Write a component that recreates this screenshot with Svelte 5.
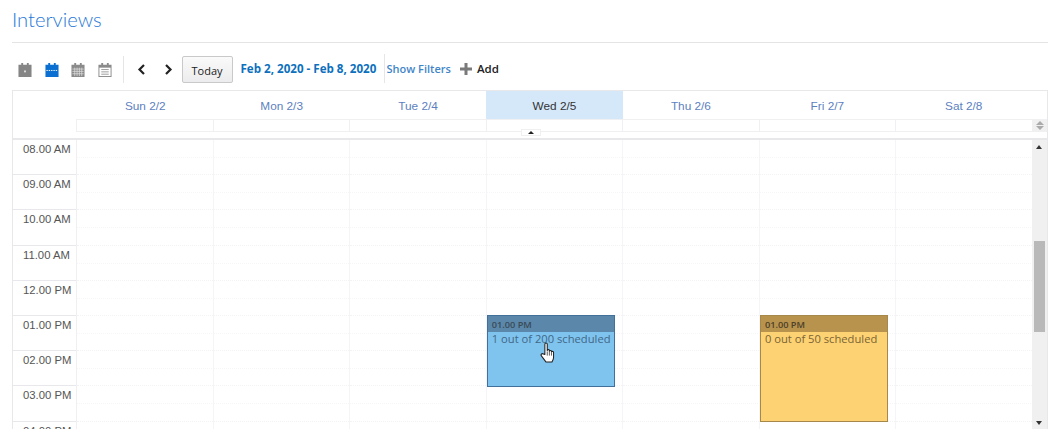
<script lang="ts">
	const days = [
		{ label: 'Sun 2/2' },
		{ label: 'Mon 2/3' },
		{ label: 'Tue 2/4' },
		{ label: 'Wed 2/5', today: true },
		{ label: 'Thu 2/6' },
		{ label: 'Fri 2/7' },
		{ label: 'Sat 2/8' }
	];
	const hours = [
		'08.00 AM',
		'09.00 AM',
		'10.00 AM',
		'11.00 AM',
		'12.00 PM',
		'01.00 PM',
		'02.00 PM',
		'03.00 PM',
		'04.00 PM'
	];
	const events: Record<number, { text: string; kind: string; height: number }> = {
		3: { text: '1 out of 200 scheduled', kind: 'blue', height: 72 },
		5: { text: '0 out of 50 scheduled', kind: 'amber', height: 107 }
	};
</script>

<div class="page">
	<h1 class="title">Interviews</h1>

	<div class="toolbar">
		<div class="views">
			<svg width="14" height="14" viewBox="0 0 14 15"><path d="M0 2h3V0h2v2h4V0h2v2h3v13H0z" fill="#858585" /><rect x="6" y="8" width="2" height="2" fill="#ddd" /></svg>
			<svg width="14" height="14" viewBox="0 0 14 15"><path d="M0 2h3V0h2v2h4V0h2v2h3v13H0z" fill="#0a6fd0" /><path d="M1 8h12" stroke="#fff" stroke-dasharray="1.5 1" /></svg>
			<svg width="14" height="14" viewBox="0 0 14 15"><path d="M0 2h3V0h2v2h4V0h2v2h3v13H0z" fill="#8a8a8a" /><path d="M1 6.500h12M1 9h12M1 11.500h12M3.500 5v9M6 5v9M8.500 5v9M11 5v9" stroke="#ddd" stroke-width=".8" /></svg>
			<svg width="14" height="14" viewBox="0 0 14 15"><path d="M0 2h3V0h2v2h4V0h2v2h3v13H0z" fill="#8a8a8a" /><rect x="1" y="5" width="12" height="9" fill="#fff" /><path d="M3 7h8M3 9.500h8M3 12h8" stroke="#999" /></svg>
		</div>
		<div class="nav">
			<svg width="9" height="11" viewBox="0 0 9 11"><path d="M7 1 2.500 5.500 7 10" fill="none" stroke="#222" stroke-width="2.200" /></svg>
			<svg width="9" height="11" viewBox="0 0 9 11"><path d="M2 1l4.500 4.500L2 10" fill="none" stroke="#222" stroke-width="2.200" /></svg>
		</div>
		<button class="today">Today</button>
		<span class="range">Feb 2, 2020 - Feb 8, 2020</span>
		<button class="filters">Show Filters</button>
		<button class="add">
			<svg width="12" height="12" viewBox="0 0 12 12"><path d="M4.500 0h3v4.500H12v3H7.500V12h-3V7.500H0v-3h4.500z" fill="#7a7a7a" /></svg>
			Add
		</button>
	</div>

	<div class="calendar">
		<div class="head">
			<div class="days">
				{#each days as day}
					<div class="day" class:today-col={day.today}>{day.label}</div>
				{/each}
			</div>
			<div class="allday">
				{#each days as _}
					<div class="slot"></div>
				{/each}
				<div class="spin"><i class="up"></i><i class="down"></i></div>
			</div>
			<div class="splitter"><span class="grip"></span></div>
		</div>

		<div class="body">
			<div class="times">
				{#each hours as hour}
					<div class="time">{hour}</div>
				{/each}
			</div>
			<div class="grid">
				{#each days as _, i}
					<div class="col">
						{#each hours as __}
							<div class="cell"></div>
						{/each}
						{#if events[i]}
							<div class="event {events[i].kind}" style="height: {events[i].height}px">
								<div class="event-time">01.00 PM</div>
								<div class="event-text">{events[i].text}</div>
							</div>
						{/if}
						{#if i === 3}
							<svg class="hand" width="16" height="22" viewBox="0 0 15 21">
								<path d="M4.500 12V2.200c0-1.600 2.300-1.600 2.300 0V8c0-1 2-1 2 0v.8c0-1 2-1 2 0v.8c0-.9 2-.9 2 .2v4.700c0 2-.8 3-1.500 4.500H5.500L1.200 13.200c-1-1.300.7-2.800 1.900-1.700z" fill="#fff" stroke="#222" stroke-width="1" stroke-linejoin="round" />
								<path d="M6.800 9v4M8.800 9v4M10.800 10v3" stroke="#222" stroke-width=".7" />
							</svg>
						{/if}
					</div>
				{/each}
			</div>
			<div class="scrollbar">
				<i class="arrow-up"></i>
				<div class="thumb"></div>
				<i class="arrow-down"></i>
			</div>
		</div>
	</div>
</div>

<style>
	:global(body) {
		margin: 0;
		background: #fff;
	}
	.page {
		width: 1056px;
		height: 439px;
		padding: 0 8px 10px 12px;
		box-sizing: border-box;
		overflow: hidden;
		display: flex;
		flex-direction: column;
		font-family: 'Liberation Sans', Arial, sans-serif;
	}
	.title {
		margin: 0;
		flex: none;
		box-sizing: border-box;
		height: 43px;
		padding-top: 6px;
		font: 300 20.200px/26px Lato, sans-serif;
		color: #1f78d8;
		border-bottom: 1px solid #e4e4e4;
	}
	.toolbar {
		flex: none;
		height: 47px;
		display: flex;
		align-items: center;
		box-sizing: border-box;
		padding: 6px 0 0 6px;
	}
	.views {
		display: flex;
		gap: 12.500px;
		padding-right: 11px;
		height: 27px;
		align-items: center;
		border-right: 1px solid #e6e6e6;
	}
	.nav {
		display: flex;
		gap: 18px;
		padding-left: 13px;
		padding-right: 9px;
		margin-top: -1px;
	}
	.today {
		width: 51px;
		height: 27px;
		padding: 2px 0 0;
		font: 11px 'Open Sans', sans-serif;
		color: #222;
		background: linear-gradient(#fafafa, #ececee);
		border: 1px solid #c9c9c9;
		border-radius: 2px;
	}
	.range {
		margin-left: 8px;
		width: 143px;
		height: 29px;
		border-right: 1px solid #e6e6e6;
		font: 700 11.600px/29px 'Open Sans', sans-serif;
		color: #0d70bd;
		white-space: nowrap;
		margin-top: -2px;
	}
	.filters {
		margin-left: 2px;
		padding: 0;
		border: none;
		background: none;
		font: 600 11px 'Open Sans', sans-serif;
		color: #3f86c8;
		white-space: nowrap;
		margin-top: -2px;
	}
	.add {
		margin-left: 9px;
		padding: 0;
		display: flex;
		align-items: center;
		gap: 5px;
		border: none;
		background: none;
		font: 600 11.500px 'Open Sans', sans-serif;
		color: #222;
		margin-top: -2px;
	}
	.calendar {
		flex: 1;
		min-height: 0;
		display: flex;
		flex-direction: column;
		border: 1px solid #e8e8eb;
		border-bottom: none;
		overflow: hidden;
	}
	.head {
		flex: none;
		padding-left: 64px;
	}
	.days {
		display: flex;
		height: 28px;
		padding-right: 15px;
	}
	.day {
		flex: 1;
		display: flex;
		align-items: center;
		justify-content: center;
		padding-top: 2px;
		box-sizing: border-box;
		font-size: 11.800px;
		color: #5d7fc0;
	}
	.today-col {
		background: #d5e8fa;
		color: #333;
	}
	.allday {
		display: flex;
		height: 13px;
		margin-left: -1px;
		box-sizing: border-box;
		border-top: 1px solid #f0f0f3;
		border-bottom: 1px solid #f0f0f3;
	}
	.slot {
		flex: 1;
		border-left: 1px solid #f0f0f3;
	}
	.spin {
		width: 15px;
		flex: none;
		background: #f0f0f0;
		display: flex;
		flex-direction: column;
		align-items: center;
		justify-content: center;
		gap: 1px;
	}
	.spin i {
		width: 0;
		height: 0;
		border-left: 4px solid transparent;
		border-right: 4px solid transparent;
	}
	.up {
		border-bottom: 4px solid #aaa;
	}
	.down {
		border-top: 4px solid #aaa;
	}
	.splitter {
		position: relative;
		height: 6px;
		margin-left: -64px;
		border-bottom: 2px solid #e8e8ea;
	}
	.grip {
		position: absolute;
		left: 508px;
		top: -3px;
		width: 20px;
		height: 7px;
		background: #fff;
		border: 1px solid #f0f0f0;
		box-sizing: border-box;
	}
	.grip::after {
		content: '';
		position: absolute;
		left: 6px;
		top: 1px;
		border-left: 3px solid transparent;
		border-right: 3px solid transparent;
		border-bottom: 3px solid #222;
	}
	.body {
		flex: 1;
		min-height: 0;
		display: flex;
		overflow: hidden;
	}
	.times {
		flex: none;
		width: 64px;
		border-right: 1px solid #f0f0f3;
		box-sizing: border-box;
	}
	.time {
		height: 35.200px;
		box-sizing: border-box;
		border-bottom: 1px solid #e8e8ec;
		padding: 2px 0 0 10px;
		font-size: 11.300px;
		line-height: 14px;
		color: #555;
	}
	.grid {
		flex: 1;
		display: flex;
		min-width: 0;
	}
	.col {
		position: relative;
		flex: 1;
		border-left: 1px solid #f5f5f7;
		box-sizing: border-box;
	}
	.col:first-child {
		border-left: none;
	}
	.cell {
		height: 35.200px;
		box-sizing: border-box;
		border-bottom: 1px dotted #f3f3f6;
		background-image: linear-gradient(to right, #f6f6f8 50%, transparent 50%);
		background-position: 0 17px;
		background-size: 2px 1px;
		background-repeat: repeat-x;
	}
	.event {
		position: absolute;
		top: 175px;
		left: 0;
		width: 128px;
		box-sizing: border-box;
		border: 1px solid;
		font: 11.200px/14px 'Open Sans', sans-serif;
	}
	.event-time {
		height: 16px;
		padding-left: 4px;
		font-size: 9.200px;
		font-weight: 600;
		line-height: 17px;
	}
	.event-text {
		padding: 0 0 0 4px;
		white-space: nowrap;
		line-height: 14px;
	}
	.blue {
		background: #7fc3ef;
		border-color: #41709a;
		color: #3f6886;
	}
	.blue .event-time {
		background: #5b88aa;
		color: #3a4a58;
	}
	.amber {
		background: #fdd273;
		border-color: #a6894a;
		color: #7b6434;
	}
	.amber .event-time {
		background: #b8934e;
		color: #4d4028;
	}
	.hand {
		position: absolute;
		left: 53px;
		top: 202px;
	}
	.scrollbar {
		position: relative;
		flex: none;
		width: 15px;
		background: #f0f0f1;
	}
	.thumb {
		position: absolute;
		top: 101px;
		left: 2px;
		width: 11px;
		height: 91px;
		background: #b9b9b9;
	}
	.arrow-up,
	.arrow-down {
		position: absolute;
		left: 4px;
		border-left: 3.500px solid transparent;
		border-right: 3.500px solid transparent;
	}
	.arrow-up {
		top: 5px;
		border-bottom: 4px solid #333;
	}
	.arrow-down {
		bottom: 4px;
		border-top: 4px solid #333;
	}
</style>
